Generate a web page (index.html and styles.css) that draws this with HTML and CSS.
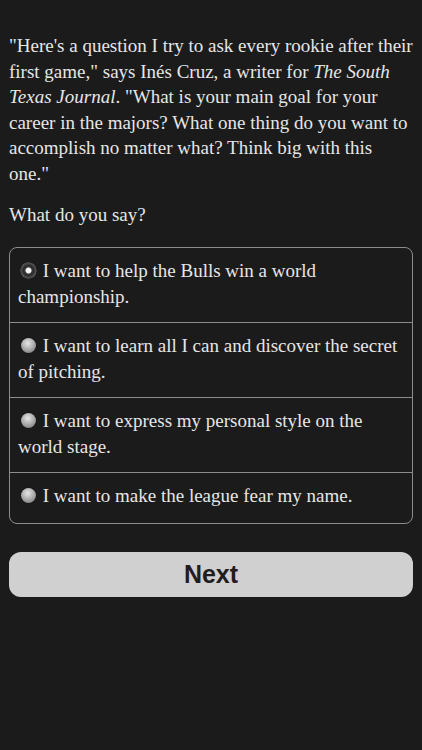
FILE: index.html
```html
<!DOCTYPE html>
<html>
<head>
<meta charset="utf-8">
<link rel="stylesheet" href="styles.css">
</head>
<body>
<main class="page">
  <p class="story">"Here's a question I try to ask every rookie after their first game," says Inés Cruz, a writer for <em>The South Texas Journal</em>. "What is your main goal for your career in the majors? What one thing do you want to accomplish no matter what? Think big with this one."</p>
  <p class="prompt">What do you say?</p>
  <div class="choices">
    <label class="choice"><span class="radio selected"></span> I want to help the Bulls win a world championship.</label>
    <label class="choice"><span class="radio"></span> I want to learn all I can and discover the secret of pitching.</label>
    <label class="choice"><span class="radio"></span> I want to express my personal style on the world stage.</label>
    <label class="choice"><span class="radio"></span> I want to make the league fear my name.</label>
  </div>
  <button class="next">Next</button>
</main>
</body>
</html>
```
FILE: styles.css
```css
html, body {
  margin: 0;
  padding: 0;
  background: #1b1b1b;
}
.page {
  padding: 33px 9px 0 9px;
  color: #e6e6e6;
  font-family: "Liberation Serif", "Times New Roman", serif;
  font-size: 19px;
  line-height: 25.5px;
}
.story {
  margin: 0 -2px 0 0;
}
.prompt {
  margin: 16px 0 0 0;
}
.choices {
  margin-top: 19px;
  border: 1px solid #8c8c8c;
  border-radius: 8px;
  overflow: hidden;
}
.choice {
  display: block;
  padding: 10px 8px 12px 8px;
  line-height: 26px;
  border-top: 1px solid #8c8c8c;
}
.choice:first-child {
  border-top: none;
}
.choice:last-child {
  padding-bottom: 14px;
}
.radio {
  display: inline-block;
  width: 15px;
  height: 15px;
  border-radius: 50%;
  vertical-align: -1px;
  margin-left: 3px;
  margin-right: 2px;
  background: radial-gradient(circle at 45% 35%, #e6e6e6 0%, #b0b0b0 45%, #6a6a6a 100%);
  box-shadow: 0 0 1px #000;
}
.radio.selected {
  background: radial-gradient(circle at 50% 50%, #ffffff 0, #f0f0f0 2.5px, #3a3a3a 3.5px, #2a2a2a 5px, #555 7.5px);
  box-shadow: 0 0 0 0.5px #777;
}
.next {
  display: block;
  width: 100%;
  height: 45px;
  margin-top: 28px;
  border: none;
  border-radius: 12px;
  background: #d0d0d0;
  color: #1e1e1e;
  font-family: "Liberation Sans", Arial, sans-serif;
  font-weight: bold;
  font-size: 25px;
  padding: 0;
}
```
